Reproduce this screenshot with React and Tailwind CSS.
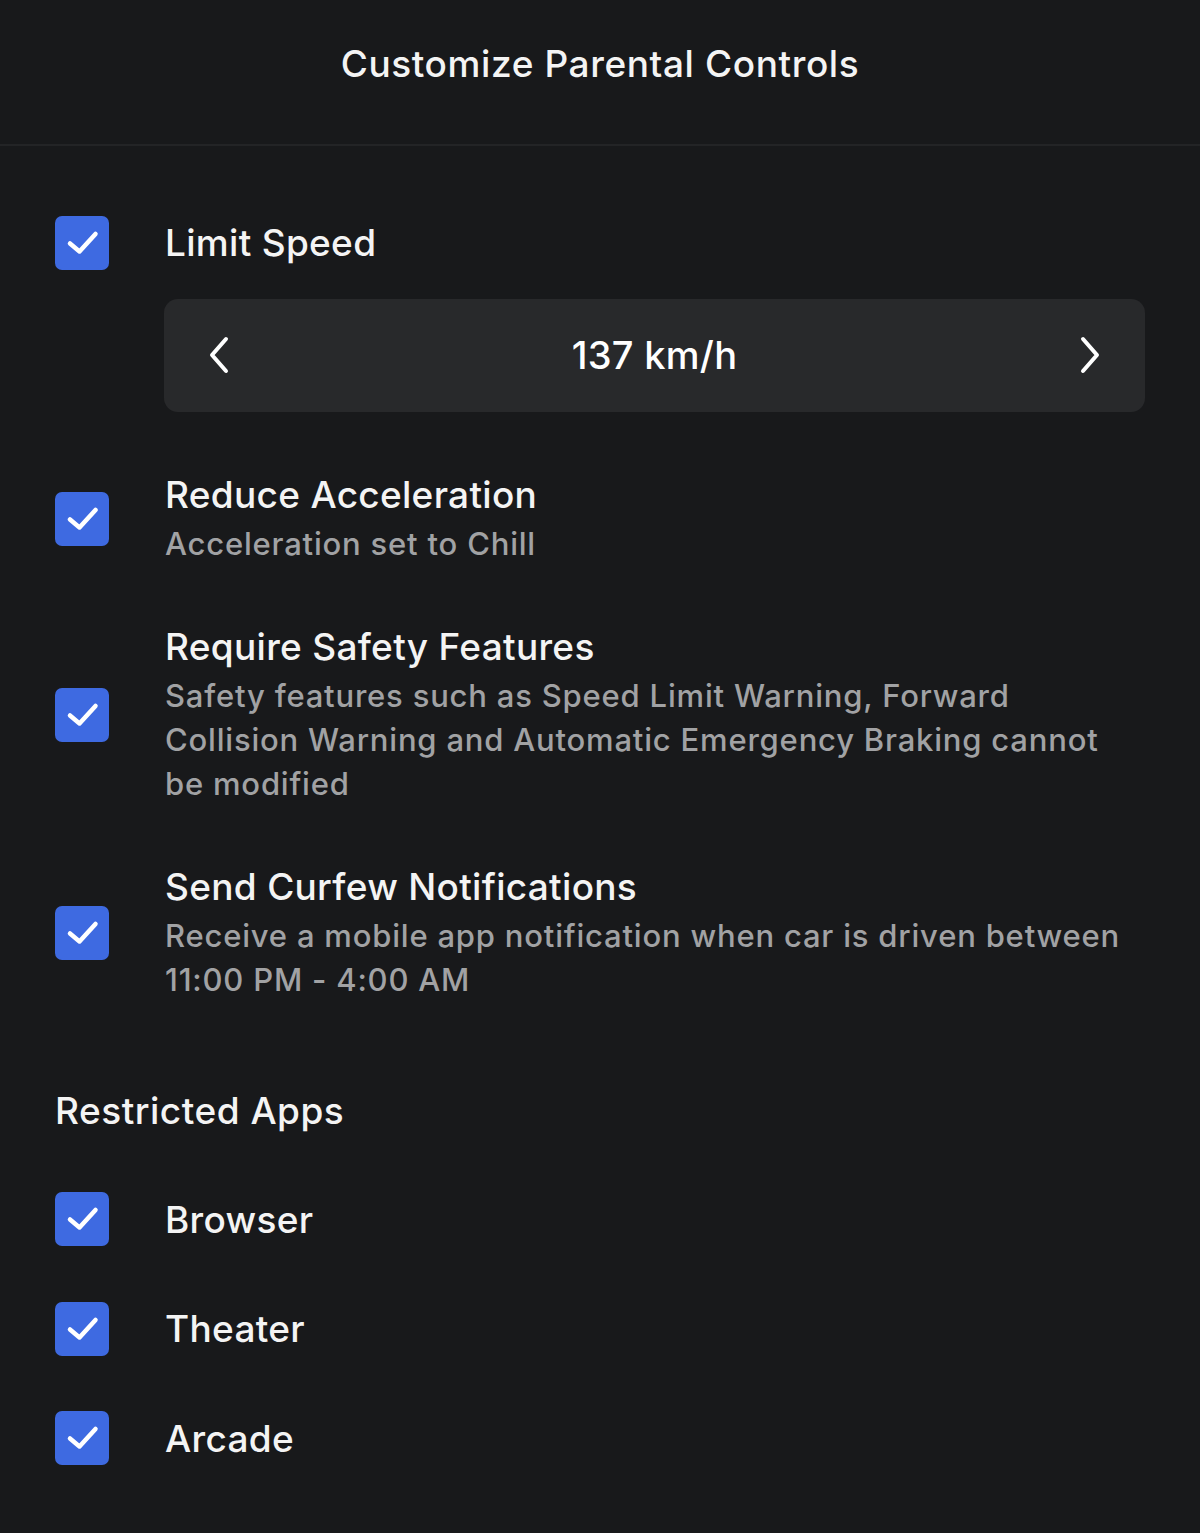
const font = { fontFamily: "Inter, 'Noto Sans', sans-serif" };

function Checkbox() {
    return (
        <div className="h-[54px] w-[54px] shrink-0 rounded-[7px] bg-[#3e6ae1]">
            <svg width="54" height="54" viewBox="0 0 54 54" fill="none">
                <path
                    d="M15 27.5 L24.5 35.5 L40.5 18"
                    stroke="#ffffff"
                    strokeWidth="4.5"
                    strokeLinecap="round"
                    strokeLinejoin="round"
                />
            </svg>
        </div>
    );
}

function Chevron({ dir }) {
    return (
        <svg width="26" height="38" viewBox="0 0 26 38" fill="none">
            <path
                d={dir === "left" ? "M20 3 L6 19 L20 35" : "M6 3 L20 19 L6 35"}
                stroke="#ffffff"
                strokeWidth="4"
                strokeLinecap="round"
                strokeLinejoin="round"
            />
        </svg>
    );
}

function OptionRow({ title, desc }) {
    return (
        <div className="flex items-center gap-[56px]">
            <Checkbox />
            <div className="flex-1">
                <p className="text-[37px] font-medium leading-[44px] tracking-[0.3px] text-[#f4f4f4]">{title}</p>
                {desc && (
                    <p className="mt-[5px] max-w-[960px] text-[31px] font-medium leading-[44px] tracking-[0.8px] text-[#a1a2a4]">
                        {desc}
                    </p>
                )}
            </div>
        </div>
    );
}

export default function App() {
    const apps = ["Browser", "Theater", "Arcade"];

    return (
        <div className="min-h-[1533px] w-full bg-[#18191b]" style={font}>
            {/* header */}
            <div className="flex h-[146px] items-center justify-center border-b-2 border-[#232426] pb-[16px]">
                <h1 className="text-[37px] font-medium tracking-[0.6px] text-[#f4f4f4]">Customize Parental Controls</h1>
            </div>

            <div className="pl-[55px] pr-[55px] pt-[69px]">
                {/* limit speed */}
                <div className="flex items-center gap-[56px]">
                    <Checkbox />
                    <p className="text-[37px] font-medium tracking-[0.3px] text-[#f4f4f4]">Limit Speed</p>
                </div>

                <div className="ml-[109px] mt-[28px] flex h-[113px] items-center justify-between rounded-[14px] bg-[#28292b] pl-[42px] pr-[42px]">
                    <Chevron dir="left" />
                    <span className="text-[38px] font-medium tracking-[0.3px] text-white">137 km/h</span>
                    <Chevron dir="right" />
                </div>

                <div className="mt-[61px] flex flex-col gap-[59px]">
                    <OptionRow title="Reduce Acceleration" desc="Acceleration set to Chill" />
                    <OptionRow
                        title="Require Safety Features"
                        desc="Safety features such as Speed Limit Warning, Forward Collision Warning and Automatic Emergency Braking cannot be modified"
                    />
                    <OptionRow
                        title="Send Curfew Notifications"
                        desc="Receive a mobile app notification when car is driven between 11:00 PM - 4:00 AM"
                    />
                </div>

                {/* restricted apps */}
                <h2 className="mt-[87px] text-[37px] font-medium leading-[44px] tracking-[0.5px] text-[#f4f4f4]">
                    Restricted Apps
                </h2>

                <div className="mt-[59px] flex flex-col gap-[54px] pb-[69px]">
                    {apps.map((app) => (
                        <div key={app} className="flex items-center gap-[56px]">
                            <Checkbox />
                            <p className="text-[37px] font-medium tracking-[0.3px] text-[#f4f4f4]">{app}</p>
                        </div>
                    ))}
                </div>
            </div>
        </div>
    );
}
